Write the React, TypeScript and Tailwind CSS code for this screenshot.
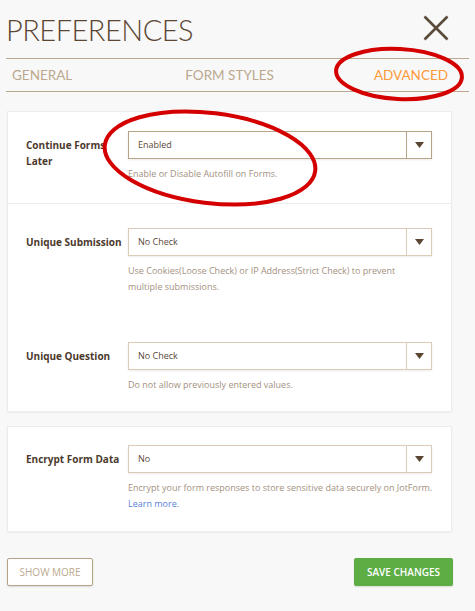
const labelFont = { fontFamily: '"Open Sans", "Noto Sans", sans-serif' };

interface SelectRowProps {
  label: string[];
  value: string;
  help: React.ReactNode;
  focused?: boolean;
}

function SelectRow({ label, value, help, focused }: SelectRowProps) {
  return (
    <div className="flex">
      <div className="w-[102px] shrink-0 pt-[6px] text-[10px] font-bold leading-[16px] text-[#4b3a2c]">
        {label.map((l) => (
          <div key={l} className="whitespace-nowrap">
            {l}
          </div>
        ))}
      </div>
      <div className="flex-1">
        <div
          className={`flex h-[28px] items-stretch border bg-white shadow-[0_1px_2px_rgba(0,0,0,0.08)] ${
            focused ? "border-[#b9a386]" : "border-[#dccbb9]"
          }`}
        >
          <div className="flex flex-1 items-center pl-[9px] text-[9px] text-[#5a4838]">{value}</div>
          <div
            className={`flex w-[25px] items-center justify-center border-l ${
              focused ? "border-[#b9a386]" : "border-[#dccbb9]"
            }`}
          >
            <svg width="9" height="6" viewBox="0 0 9 6">
              <path d="M0 0H9L4.5 6Z" fill="#5a4632" />
            </svg>
          </div>
        </div>
        <div className="mt-[7px] text-[9px] leading-[16px] text-[#a3917f]">{help}</div>
      </div>
    </div>
  );
}

export default function App() {
  return (
    <div className="relative min-h-[611px] w-[475px] bg-[#f8f8f8]" style={labelFont}>
      <div className="flex h-[58px] items-start justify-between pl-[6px] pr-[26px] pt-[13px]">
        <h1
          className="text-[29px] font-light leading-[33px] tracking-[-0.5px] text-[#5b4634]"
          style={{ fontFamily: 'Lato, "Open Sans", sans-serif' }}
        >
          PREFERENCES
        </h1>
        <svg width="26" height="26" viewBox="0 0 26 26" className="mt-[2px]">
          <path d="M1.5 1.5L24.5 24.5M24.5 1.5L1.5 24.5" stroke="#5a4a3a" strokeWidth="2.6" />
        </svg>
      </div>

      <div
        className="mx-[6px] flex h-[34px] items-center border-y border-[#bea78f] text-[13.5px] text-[#bca88f]"
        style={{ fontFamily: 'Lato, "Open Sans", sans-serif' }}
      >
        <span className="ml-[6px]">GENERAL</span>
        <span className="ml-[113px]">FORM STYLES</span>
        <span className="ml-auto mr-[21px] text-[#ff9a38]">ADVANCED</span>
      </div>

      <div className="mx-[7px] mt-[19px] w-[445px] border border-[#ececec] bg-white shadow-[0_1px_2px_rgba(0,0,0,0.05)]">
        <div className="h-[92px] border-b border-[#ececec] pl-[18px] pr-[19px] pt-[19px]">
          <SelectRow
            label={["Continue Forms", "Later"]}
            value="Enabled"
            focused
            help="Enable or Disable Autofill on Forms."
          />
        </div>
        <div className="pb-[18px] pl-[18px] pr-[19px] pt-[24px]">
          <SelectRow
            label={["Unique Submission"]}
            value="No Check"
            help={
              <>
                Use Cookies(Loose Check) or IP Address(Strict Check) to prevent
                <br />
                multiple submissions.
              </>
            }
          />
          <div className="mt-[47px]">
            <SelectRow label={["Unique Question"]} value="No Check" help="Do not allow previously entered values." />
          </div>
        </div>
      </div>

      <div className="mx-[7px] mt-[14px] w-[445px] border border-[#ececec] bg-white pb-[19px] pl-[18px] pr-[19px] pt-[18px] shadow-[0_1px_2px_rgba(0,0,0,0.05)]">
        <SelectRow
          label={["Encrypt Form Data"]}
          value="No"
          help={
            <>
              <span className="whitespace-nowrap">
                Encrypt your form responses to store sensitive data securely on JotForm.
              </span>
              <br />
              <span className="text-[#5b7fd9]">Learn more.</span>
            </>
          }
        />
      </div>

      <div className="mx-[7px] mt-[26px] flex w-[446px] justify-between">
        <button
          type="button"
          className="h-[28px] w-[86px] rounded-[2px] border border-[#b9a386] bg-white text-[10px] text-[#bba98f] shadow-[0_1px_2px_rgba(0,0,0,0.12)]"
        >
          SHOW MORE
        </button>
        <button
          type="button"
          className="h-[28px] w-[99px] rounded-[2px] bg-[#5cad44] text-[10px] font-semibold text-white shadow-[0_1px_2px_rgba(0,0,0,0.12)]"
        >
          SAVE CHANGES
        </button>
      </div>

      <svg className="pointer-events-none absolute left-0 top-0" width="475" height="611">
        <ellipse cx="399" cy="74" rx="63" ry="25" fill="none" stroke="#d40000" strokeWidth="4" transform="rotate(3 399 74)" />
        <ellipse cx="210" cy="158" rx="106" ry="45" fill="none" stroke="#d40000" strokeWidth="4" transform="rotate(7 210 158)" />
      </svg>
    </div>
  );
}
